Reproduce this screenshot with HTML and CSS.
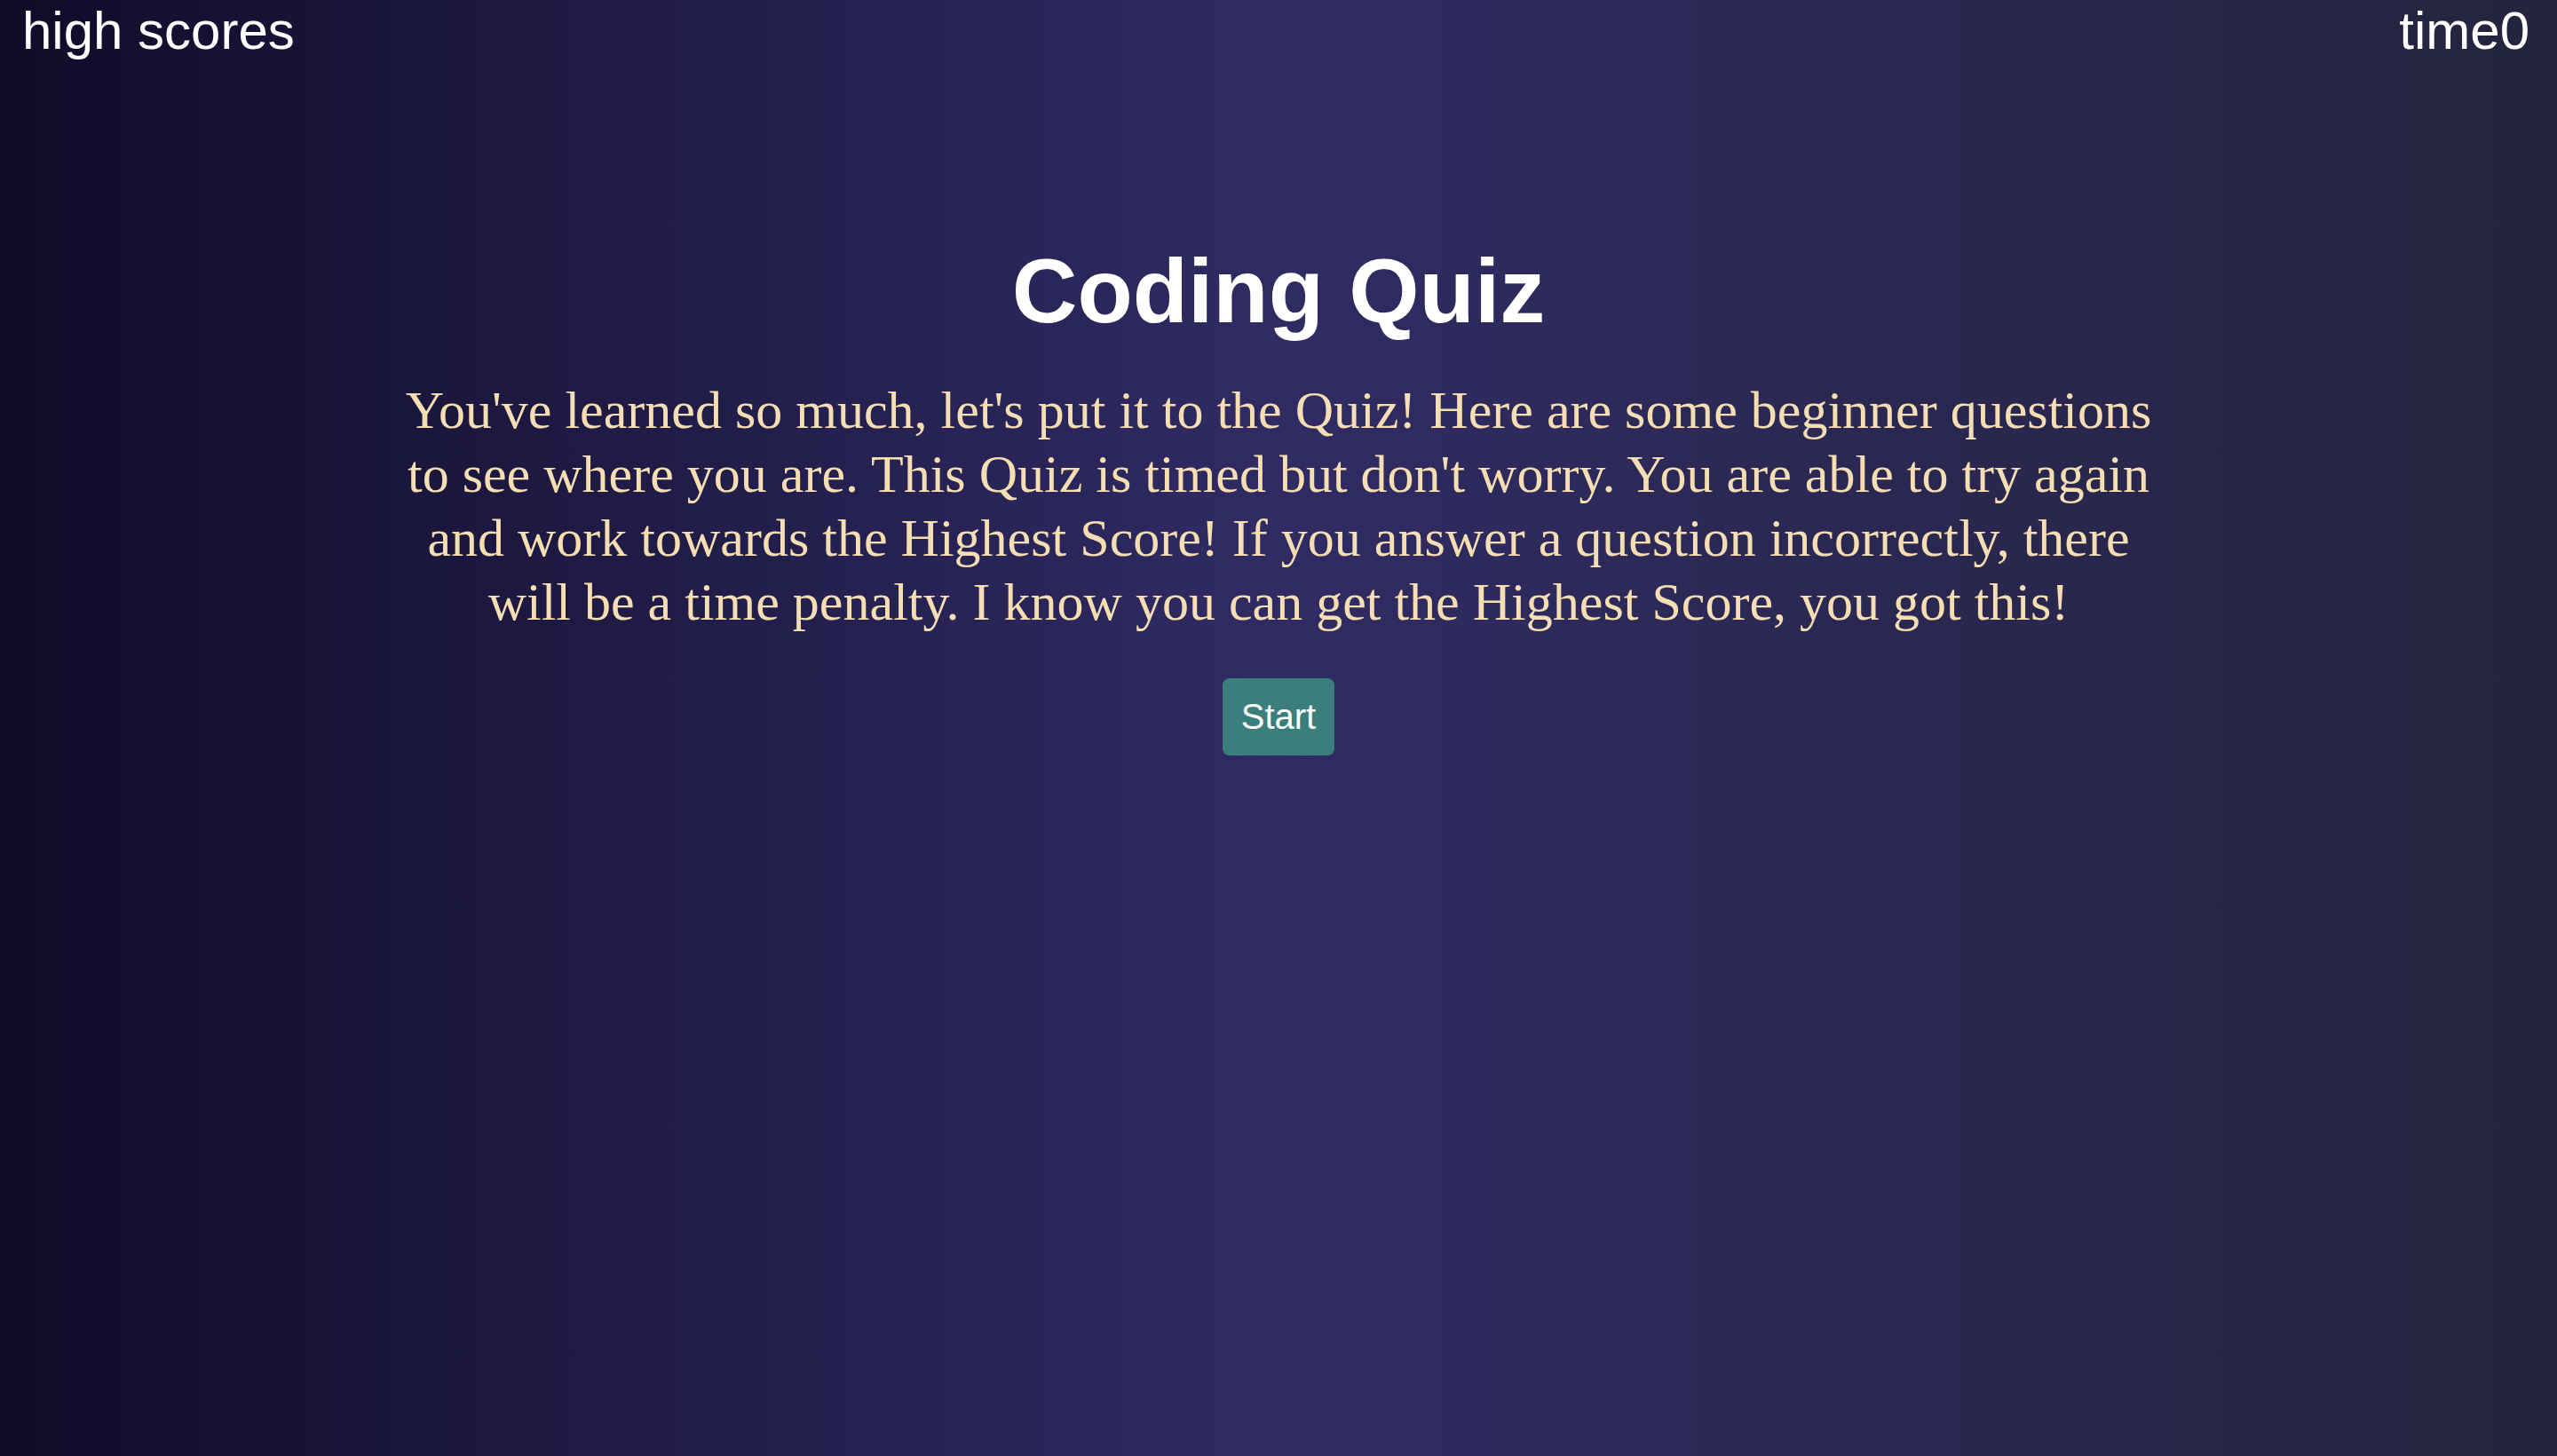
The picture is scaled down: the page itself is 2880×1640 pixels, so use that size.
FILE: index.html
```html
<!DOCTYPE html>
<html lang="en">
<head>
<meta charset="utf-8">
<title>Coding Quiz</title>
<link rel="stylesheet" href="styles.css">
</head>
<body>
  <header class="topbar">
    <a class="scores-link">high scores</a>
    <div class="timer">time<span class="time-value">0</span></div>
  </header>
  <main class="intro">
    <h1 class="title">Coding Quiz</h1>
    <p class="description">You've learned so much, let's put it to the Quiz! Here are some beginner questions to see where you are. This Quiz is timed but don't worry. You are able to try again and work towards the Highest Score! If you answer a question incorrectly, there will be a time penalty. I know you can get the Highest Score, you got this!</p>
    <button class="start-btn">Start</button>
  </main>
</body>
</html>
```
FILE: styles.css
```css
html, body {
  margin: 0;
  padding: 0;
}

body {
  min-height: 100vh;
  background: linear-gradient(to right, #0f0c29, #302b63, #24243e);
  font-family: "Liberation Sans", Arial, sans-serif;
  color: #ffffff;
}

.topbar {
  display: flex;
  justify-content: space-between;
  align-items: flex-start;
  padding: 0 31px 0 25px;
  font-size: 60px;
}

.scores-link {
  color: #ffffff;
  cursor: pointer;
}

.timer {
  color: #ffffff;
}

.intro {
  display: flex;
  flex-direction: column;
  align-items: center;
}

.title {
  margin: 201px 0 0 0;
  font-size: 102px;
  font-weight: bold;
  color: #ffffff;
}

.description {
  margin: 39px 0 0 0;
  width: 1990px;
  font-family: "Liberation Serif", "Times New Roman", serif;
  font-size: 60px;
  line-height: 72px;
  text-align: center;
  color: #f5deb3;
}

.start-btn {
  margin-top: 50px;
  padding: 21px 21px;
  border: none;
  border-radius: 8px;
  background: #3b7f7c;
  color: #ffffff;
  font-family: "Liberation Sans", Arial, sans-serif;
  font-size: 40px;
  cursor: pointer;
}
```
